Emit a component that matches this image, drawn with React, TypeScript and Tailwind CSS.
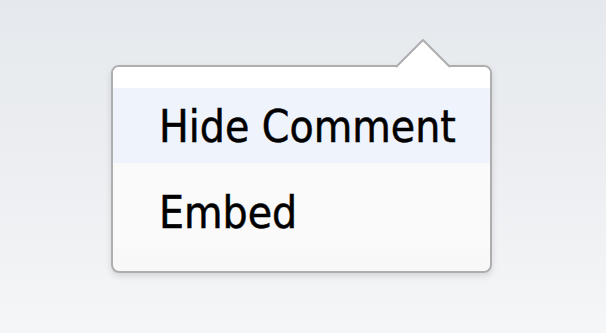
const menuFont = {
  fontFamily: '"DejaVu Sans Condensed", "DejaVu Sans", sans-serif',
};

const Caret = () => (
  <svg
    width="56"
    height="30"
    viewBox="0 0 56 30"
    className="absolute left-[282px] -top-[28px]"
  >
    <polygon points="2,27 28,1 54,27 54,30 2,30" fill="#ffffff" />
    <polyline
      points="1,28 28,1 55,28"
      fill="none"
      stroke="#aeaeae"
      strokeWidth="2"
      strokeLinejoin="round"
    />
  </svg>
);

export default function App() {
  return (
    <div className="w-[606px] h-[333px] bg-gradient-to-b from-[#e5e9ed] via-[#eceef1] to-[#f5f6f8] pt-[65px] pl-[111px]">
      <div
        className="relative w-[381px] h-[208px] rounded-[8px] border-2 border-[#aeaeae] bg-gradient-to-b from-white to-[#f8f8f8] shadow-[0_3px_6px_rgba(0,0,0,0.12)] text-black"
        style={menuFont}
      >
        <Caret />
        <div className="h-[21px] bg-white rounded-t-[6px]" />
        <div className="h-[75px] leading-[75px] pt-[1px] pl-[46px] text-[44px] bg-[#eff3fc] [-webkit-text-stroke:0.5px_black]">
          Hide Comment
        </div>
        <div className="h-[86px] pt-[12px] pl-[46px] text-[44px] leading-[75px] bg-[#fafafa] [-webkit-text-stroke:0.5px_black]">
          Embed
        </div>
      </div>
    </div>
  );
}
